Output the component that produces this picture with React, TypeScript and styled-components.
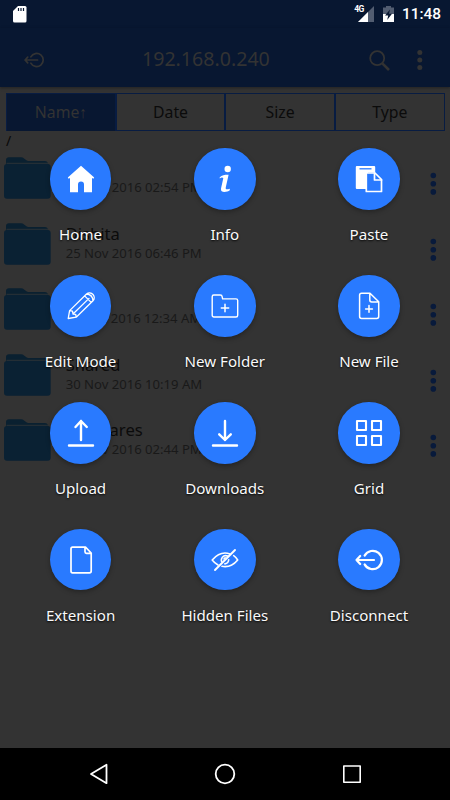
import React from 'react';
import styled, { createGlobalStyle } from 'styled-components';

const Global = createGlobalStyle`
  * { box-sizing: border-box; }
  body { margin: 0; background: #333; font-family: "Noto Sans", "Open Sans", sans-serif; }
`;

const Screen = styled.div`
  position: relative;
  width: 450px;
  height: 800px;
  overflow: hidden;
  display: flex;
  flex-direction: column;
  background: #333333;
`;

const StatusBar = styled.header`
  height: 28px;
  flex: none;
  display: flex;
  align-items: center;
  justify-content: space-between;
  padding: 0 9px 0 12px;
  background: #081731;
  color: #fff;
`;

const StatusIcons = styled.div`
  display: flex;
  align-items: center;
`;

const BatteryIcon = styled.svg`
  margin-left: 7px;
`;

const Clock = styled.time`
  width: 39px;
  margin-left: 7px;
  font: 500 15.4px/28px Roboto, sans-serif;
  white-space: nowrap;
`;

const NetworkType = styled.span`
  font: 700 8.5px/9px "Roboto", sans-serif;
  letter-spacing: -0.4px;
  align-self: flex-start;
  margin: 5px -7px 0 0;
  z-index: 1;
`;

const AppBar = styled.div`
  height: 59px;
  flex: none;
  display: grid;
  grid-template-columns: 44px 1fr 39px 27px;
  align-items: center;
  padding: 5px 15px 0 24px;
  background: #081731;
  box-shadow: 0 1px 3px rgba(0, 0, 0, 0.35);
  color: #333333;
`;

const Title = styled.h1`
  margin: 0 0 3px 74px;
  font-size: 19.6px;
  font-weight: 400;
  line-height: 26px;
  white-space: nowrap;
`;

const SortBar = styled.div`
  display: grid;
  grid-template-columns: 110px 109px 110px 109.5px;
  width: 438.5px;
  height: 38px;
  flex: none;
  margin: 6px 0 0 6px;
  border: solid #081c42;
  border-width: 1px 0;
`;

const SortTab = styled.button<{ $active?: boolean }>`
  border: 1px solid #081c42;
  border-width: 0 1px;
  padding: 0;
  background: ${p => (p.$active ? '#081731' : 'transparent')};
  color: ${p => (p.$active ? '#333333' : '#0b0b0b')};
  font: 400 15.8px/37px "Noto Sans", sans-serif;
`;

const Path = styled.div`
  height: 21px;
  flex: none;
  padding-left: 6px;
  font-size: 14px;
  line-height: 20px;
  color: #080808;
`;

const FileList = styled.ul`
  flex: 1;
  margin: 0;
  padding: 0;
  list-style: none;
`;

const FileRow = styled.li`
  display: flex;
  height: 65.6px;
  padding: 4px 5px 0 4px;
`;

const FileText = styled.div`
  width: 357px;
  margin-left: 15px;
  display: flex;
  flex-direction: column;
`;

const FileName = styled.span`
  height: 22px;
  font-size: 16.6px;
  line-height: 24px;
  color: #0b0b0b;
`;

const FileDate = styled.span`
  font-size: 13.1px;
  line-height: 19px;
  color: #191919;
`;

const MoreDots = styled.svg`
  margin: 16px 0 0 1px;
  flex: none;
`;

const NavBar = styled.nav`
  height: 52px;
  flex: none;
  display: flex;
  justify-content: space-between;
  align-items: center;
  padding: 0 87px 0 88px;
  background: #000;
`;

const ActionOverlay = styled.div`
  position: absolute;
  left: 8.5px;
  top: 148.3px;
  display: grid;
  grid-template-columns: repeat(3, 144.2px);
  grid-auto-rows: 126.9px;
`;

const Action = styled.div`
  display: flex;
  flex-direction: column;
  align-items: center;
`;

const ActionButton = styled.button`
  width: 61.5px;
  height: 61.5px;
  padding: 0;
  border: 0;
  border-radius: 50%;
  display: flex;
  align-items: center;
  justify-content: center;
  background: #297aff;
  box-shadow: 0 2px 5px rgba(0, 0, 0, 0.3);
`;

const ActionLabel = styled.span`
  margin-top: 13.6px;
  font-size: 15.1px;
  line-height: 22px;
  color: #fafafa;
  text-shadow: 0 1px 2px rgba(0, 0, 0, 0.9);
  white-space: nowrap;
`;

const Line = styled.svg`
  fill: none;
  stroke: currentColor;
  stroke-linecap: round;
  stroke-linejoin: round;
  overflow: visible;
  color: inherit;
`;

const WhiteLine = styled(Line)`
  color: #fff;
`;

const ExitGlyph = () => (
  <path d="M9.6 9.6A9.2 9.2 0 1 1 9.6 18.4M1.5 14H19M5.2 10L1.5 14L5.2 18" />
);

const icons: Record<string, React.ReactNode> = {
  Home: (
    <path fill="#fff" stroke="none" d="M14 .8 27.2 12.5 26.4 13.8 25 13V27.2H17V19.5a3 3 0 0 0-6 0V27.2H3V13L1.6 13.8.8 12.5Z" />
  ),
  Info: (
    <g fill="#fff" stroke="none">
      <circle cx="16.7" cy="4" r="3.2" />
      <path d="M8.7 12.2C11 10 14.3 9.6 17.6 9.7L14.8 22.2C14.4 24.4 15 24.9 18.8 23.8V25.3C16.3 27.2 9.2 28.6 10 23.5L12.3 13.3C11.7 12.1 10.3 12.3 8.8 13.4Z" />
    </g>
  ),
  Paste: (
    <>
      <path fill="#fff" stroke="none" d="M1.8 1H19.2Q20.2 1 20.2 2V7.5H13V24H1.8Q.8 24 .8 23V2Q.8 1 1.8 1Z" />
      <path stroke="#297aff" strokeWidth="1.3" strokeLinecap="butt" d="M4.5 3.8H16.5" />
      <path strokeWidth="1.7" fill="#297aff" d="M11.3 8H20L26.5 14.5V26.5H11.3Z" />
      <path strokeWidth="1.7" d="M19.5 8V15H26.5" />
    </>
  ),
  'Edit Mode': (
    <path strokeWidth="1.3" d="M1.2 26.5 2.6 18.6 19.5 2C21.5.4 24.3.7 26 2.5 27.6 4.3 27.7 7 26 8.7L9.2 25.2ZM1.2 26.5 9.2 25.2M2.6 18.6 5.5 19.2 6 22 8.7 22.4 9.2 25.2M6 22 22 6.4M17.6 3.9 24.2 10.4M19.5 2Q25.5 2.5 26 8.7" />
  ),
  'New Folder': (
    <>
      <path strokeWidth="1.4" d="M2.8 3H9.2Q11 3 11.2 4.8L11.6 6.9H25Q26.7 6.9 26.7 8.6V23.2Q26.7 25 25 25H3Q1.2 25 1.2 23.2V4.7Q1.2 3 2.8 3Z" />
      <path strokeWidth="1.5" d="M14 12.3V19.7M10.3 16H17.7" />
    </>
  ),
  'New File': (
    <>
      <path strokeWidth="1.5" d="M6.5 1.2H15L23.7 9.8V24.6Q23.7 26.5 21.8 26.5H6.5Q4.6 26.5 4.6 24.6V3.1Q4.6 1.2 6.5 1.2ZM14.8 1.2V8Q14.8 9.9 16.7 9.9H23.5" />
      <path strokeWidth="1.5" d="M14 13.5V20.3M10.6 16.9H17.4" />
    </>
  ),
  Upload: <path strokeWidth="2.4" d="M14 21V2M8.5 8 14 2 19.8 8M2 26.5H26" />,
  Downloads: <path strokeWidth="2.4" d="M14 2V21M8.2 15.3 14 21 19.8 15.3M2 26.5H26" />,
  Grid: (
    <path strokeWidth="2.1" d="M2 2H11V11H2ZM17 2H26V11H17ZM2 17H11V26H2ZM17 17H26V26H17Z" />
  ),
  Extension: (
    <path strokeWidth="1.7" d="M5.5 1.2H18.5L24.2 7V25Q24.2 26.8 22.5 26.8H5.5Q4 26.8 4 25V3Q4 1.2 5.5 1.2ZM18 1.5V5.7Q18 7.3 19.5 7.3H24" />
  ),
  'Hidden Files': (
    <>
      <path strokeWidth="1.6" d="M19 8Q9.5 4.5 1.2 14 3.5 17 7 19M22.7 9.7Q25 11.2 26.7 14 20 22 11 20.3M17.3 10.2Q11.8 8.3 10.4 13.2 10.2 14.5 10.6 15.6M17.7 13.8Q17.5 17.3 13.9 17.9M13 13Q13 11.9 14.2 11.7" />
      <path strokeWidth="1.9" d="M24 4 4 24" />
    </>
  ),
  Disconnect: <g strokeWidth="2.2"><ExitGlyph /></g>,
};

const actions = Object.keys(icons);

const files = [
  { name: 'Data', date: '25 Nov 2016 02:54 PM' },
  { name: 'Dishita', date: '25 Nov 2016 06:46 PM' },
  { name: 'Misc', date: '01 Dec 2016 12:34 AM' },
  { name: 'Shared', date: '30 Nov 2016 10:19 AM' },
  { name: 'Softwares', date: '25 Nov 2016 02:44 PM' },
];

const Folder = () => (
  <svg width="47" height="44" viewBox="0 0 47 44">
    <path fill="#0a2030" d="M2 6V4Q2 1 5 1H17Q19 1 20.5 2.5L23 4.3Q24 5 26 5H41Q44 5 44.5 8V12H2Z" />
    <path fill="#0a2133" d="M3 8H44Q47 8 47 11V40Q47 43 44 43H3Q0 43 0 40V11Q0 8 3 8Z" />
    <path stroke="#2b3236" strokeWidth="1" d="M2.5 7.2H44.5" />
  </svg>
);

export default function App() {
  return (
    <>
      <Global />
      <Screen>
        <StatusBar>
          <svg width="16" height="19" viewBox="0 0 16 19">
            <path fill="#fff" d="M6 1H13Q14.5 1 14.5 2.5V16Q14.5 17.5 13 17.5H2.5Q1 17.5 1 16V6Z" />
            <path stroke="#081731" strokeWidth="1.2" d="M6.5 3V6M9 3V6M11.5 3V6" />
          </svg>
          <StatusIcons>
            <NetworkType>4G</NetworkType>
            <svg width="18" height="18" viewBox="0 0 18 18">
              <path fill="#525d71" d="M17 1V17H1Z" />
              <path fill="#fff" d="M11 7V17H1Z" />
            </svg>
            <BatteryIcon width="13" height="18" viewBox="0 0 13 18">
              <path fill="#525d71" d="M4 1H9V2.5H12V9H1V2.5H4Z" />
              <path fill="#fff" d="M1 9H12V17H1Z" />
              <path fill="#081731" d="M8 4.5 3 10.5H6.2L5.2 15 10 8.7H7Z" />
            </BatteryIcon>
            <Clock>11:48</Clock>
          </StatusIcons>
        </StatusBar>
        <AppBar>
          <Line width="20" height="20" viewBox="0 0 28 28" strokeWidth="2.4"><ExitGlyph /></Line>
          <Title>192.168.0.240</Title>
          <Line width="21" height="21" viewBox="0 0 21 21" strokeWidth="1.8">
            <circle cx="8.2" cy="8.2" r="7" />
            <path strokeWidth="2.6" strokeLinecap="butt" d="M13.3 13.3 20 20" />
          </Line>
          <svg width="20" height="20" viewBox="0 0 20 20" fill="#333">
            <circle cx="11.8" cy="2.5" r="2.5" /><circle cx="11.8" cy="10" r="2.5" /><circle cx="11.8" cy="17.5" r="2.5" />
          </svg>
        </AppBar>
        <SortBar>
          <SortTab $active>Name↑</SortTab>
          <SortTab>Date</SortTab>
          <SortTab>Size</SortTab>
          <SortTab>Type</SortTab>
        </SortBar>
        <Path>/</Path>
        <FileList>
          {files.map(file => (
            <FileRow key={file.name}>
              <Folder />
              <FileText>
                <FileName>{file.name}</FileName>
                <FileDate>{file.date}</FileDate>
              </FileText>
              <MoreDots width="24" height="24" viewBox="0 0 24 24" fill="#081a3b">
                <circle cx="12.3" cy="3.5" r="2.8" /><circle cx="12.3" cy="11.7" r="2.8" /><circle cx="12.3" cy="19.9" r="2.8" />
              </MoreDots>
            </FileRow>
          ))}
        </FileList>
        <NavBar>
          <WhiteLine width="20" height="22" viewBox="0 0 20 22" strokeWidth="1.8"><path d="M18.5 1.8V20.2L3 11Z" /></WhiteLine>
          <WhiteLine width="22" height="22" viewBox="0 0 22 22" strokeWidth="1.8"><circle cx="11" cy="11" r="9.3" /></WhiteLine>
          <WhiteLine width="22" height="22" viewBox="0 0 22 22" strokeWidth="1.6"><path d="M2.8 3H19.2V19.2H2.8Z" /></WhiteLine>
        </NavBar>
        <ActionOverlay>
          {actions.map(label => (
            <Action key={label}>
              <ActionButton aria-label={label}>
                <WhiteLine width="28" height="28" viewBox="0 0 28 28">{icons[label]}</WhiteLine>
              </ActionButton>
              <ActionLabel>{label}</ActionLabel>
            </Action>
          ))}
        </ActionOverlay>
      </Screen>
    </>
  );
}
